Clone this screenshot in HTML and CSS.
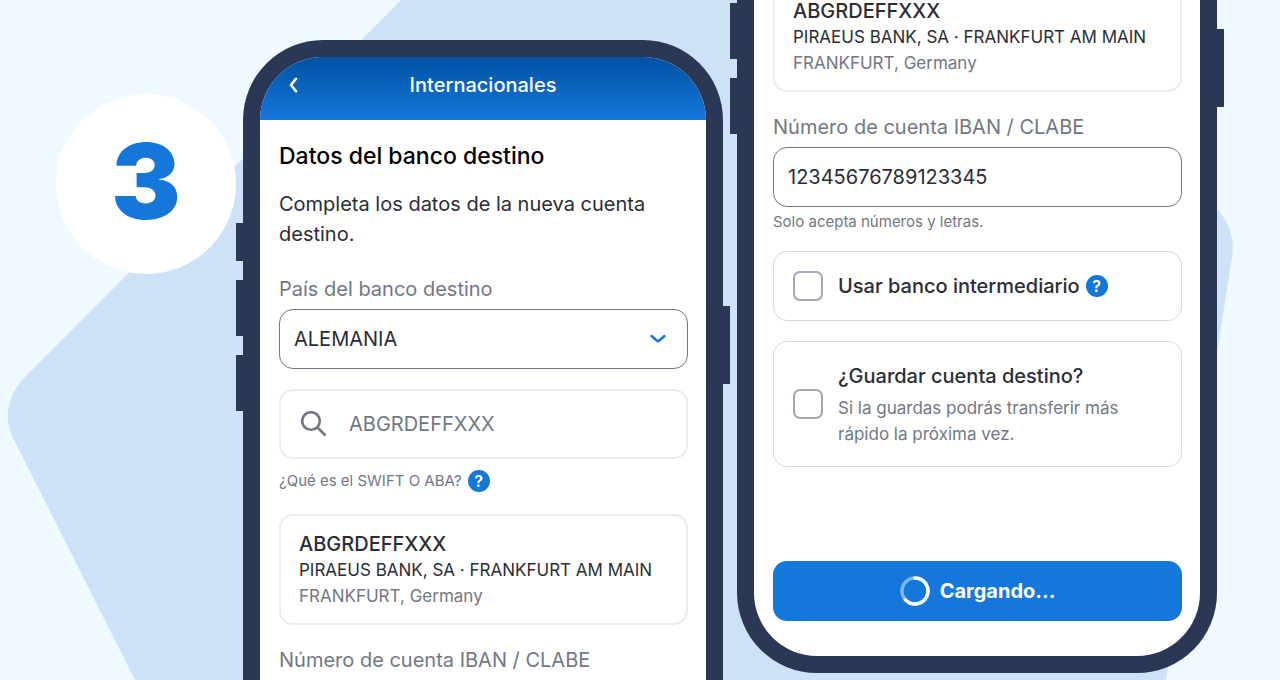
FILE: index.html
```html
<!DOCTYPE html>
<html lang="es">
<head>
    <meta charset="UTF-8">
    <meta name="viewport" content="width=device-width, initial-scale=1.0">
    <title>Internacionales - Datos del banco destino</title>
    <link rel="stylesheet" href="styles.css">
</head>
<body>
    <main class="scene">
        <svg class="scene-shape" viewBox="0 0 1280 680" preserveAspectRatio="xMidYMid slice" aria-hidden="true">
            <path d="M401 0 L25 377 C8 394 3 418 13 438 L135 680 H1166 L1232 257 C1235 238 1229 222 1217 209 L1000 0 Z"/>
        </svg>

        <div class="step">3</div>

        <section class="phone phone-first">
            <span class="key key-mute"></span>
            <span class="key key-up"></span>
            <span class="key key-down"></span>
            <span class="key key-power"></span>
            <div class="screen">
                <header class="topbar">
                    <button class="back" type="button" aria-label="Volver">
                        <svg width="10" height="16" viewBox="0 0 10 16"><path d="M8 1.800 L3 8 L8 14.200"/></svg>
                    </button>
                    <span class="topbar-title">Internacionales</span>
                </header>
                <form class="content">
                    <h1>Datos del banco destino</h1>
                    <p class="intro">Completa los datos de la nueva cuenta destino.</p>

                    <label class="label" for="country">País del banco destino</label>
                    <div class="select-box">
                        <select class="field" id="country">
                            <option>ALEMANIA</option>
                        </select>
                        <svg class="chevron" width="16" height="10" viewBox="0 0 16 10"><path d="M1.600 2 L7 6.800 Q8 7.600 9 6.800 L14.400 2"/></svg>
                    </div>

                    <div class="search">
                        <svg width="26" height="26" viewBox="0 0 26 26"><circle cx="10" cy="10" r="8.800"/><path d="M16.500 16.500 L24.500 24.500"/></svg>
                        <input type="text" aria-label="Código SWIFT o ABA" placeholder="ABGRDEFFXXX">
                    </div>

                    <div class="hint-row">
                        <span>¿Qué es el SWIFT O ABA?</span>
                        <button class="help" type="button" aria-label="Ayuda SWIFT">?</button>
                    </div>

                    <div class="bank">
                        <strong>ABGRDEFFXXX</strong>
                        <span>PIRAEUS BANK, SA · FRANKFURT AM MAIN</span>
                        <span class="muted">FRANKFURT, Germany</span>
                    </div>

                    <span class="label label-account">Número de cuenta IBAN / CLABE</span>
                </form>
            </div>
        </section>

        <section class="phone phone-second">
            <span class="key key-up"></span>
            <span class="key key-down"></span>
            <span class="key key-power"></span>
            <div class="screen">
                <form class="content">
                    <div class="bank">
                        <strong>ABGRDEFFXXX</strong>
                        <span>PIRAEUS BANK, SA · FRANKFURT AM MAIN</span>
                        <span class="muted">FRANKFURT, Germany</span>
                    </div>

                    <label class="label label-account" for="account">Número de cuenta IBAN / CLABE</label>
                    <input class="field" id="account" type="text" value="12345676789123345">
                    <p class="note">Solo acepta números y letras.</p>

                    <div class="option">
                        <input type="checkbox" id="intermediary">
                        <label for="intermediary">Usar banco intermediario</label>
                        <button class="help" type="button" aria-label="Ayuda banco intermediario">?</button>
                    </div>

                    <div class="option option-save">
                        <input type="checkbox" id="save">
                        <label for="save">
                            ¿Guardar cuenta destino?
                            <small>Si la guardas podrás transferir más rápido la próxima vez.</small>
                        </label>
                    </div>

                    <button class="submit" type="button">
                        <svg width="30" height="30" viewBox="0 0 30 30">
                            <circle class="track" cx="15" cy="15" r="13"/>
                            <path d="M15 2 A13 13 0 1 1 5.500 23.900"/>
                        </svg>
                        Cargando...
                    </button>
                </form>
            </div>
        </section>
    </main>
</body>
</html>
```

FILE: styles.css
```css
* {
    box-sizing: border-box;
}
body {
    margin: 0;
    font-family: Inter, "Liberation Sans", sans-serif;
    font-size: 20px;
    line-height: 30px;
    color: #2b2d36;
    background-color: #f0f9ff;
}
h1, p {
    margin: 0;
}
button, input, select {
    font: inherit;
    color: inherit;
}
button {
    border: none;
    padding: 0;
    cursor: pointer;
}
svg {
    display: block;
    fill: none;
}
.scene {
    position: relative;
    display: flex;
    justify-content: center;
    height: 100vh;
    padding: 0 63px 0 56px;
    overflow: hidden;
}
.scene-shape {
    position: absolute;
    inset: 0;
    width: 100%;
    height: 100%;
    fill: #cde2f6;
}
.step {
    position: relative;
    display: flex;
    flex: none;
    align-items: center;
    justify-content: center;
    width: 180px;
    height: 180px;
    margin-top: 94px;
    margin-right: 7px;
    padding-bottom: 6px;
    border-radius: 50%;
    background-color: #fff;
    color: #1677db;
    font-size: 104px;
    font-weight: 900;
}

/* phones */
.phone {
    position: relative;
    flex: 0 1 480px;
    border: 17px solid #2a3755;
    background-color: #fff;
}
.phone-first {
    margin-top: 40px;
    margin-right: 14px;
    border-bottom: none;
    border-radius: 80px 80px 0 0;
}
.phone-second {
    margin-bottom: 7px;
    border-top: none;
    border-radius: 0 0 80px 80px;
}
.screen {
    display: flex;
    flex-direction: column;
    height: 100%;
    overflow: hidden;
}
.phone-first .screen {
    border-radius: 63px 63px 0 0;
}
.phone-second .screen {
    justify-content: flex-end;
}
.content {
    display: flex;
    flex: none;
    flex-direction: column;
    padding: 21px 18px 35px 19px;
}
.key {
    position: absolute;
    left: -24px;
    width: 8px;
    height: 56px;
    background-color: #2a3755;
}
.key-power {
    left: auto;
    right: -24px;
    height: 78px;
}
.phone-first .key-mute {
    top: 166px;
    height: 38px;
}
.phone-first .key-up {
    top: 223px;
}
.phone-first .key-down {
    top: 298px;
}
.phone-first .key-power {
    top: 249px;
}
.phone-second .key-up {
    top: 3px;
}
.phone-second .key-down {
    top: 78px;
}
.phone-second .key-power {
    top: 29px;
}

/* header */
.topbar {
    display: grid;
    grid-template-columns: 10px 1fr 10px;
    flex: none;
    align-items: center;
    padding: 13px 28px 20px;
    background: linear-gradient(#0052a2, #1677db);
    color: #fff;
}
.topbar-title {
    text-align: center;
    font-weight: 500;
}
.back {
    background: none;
}
.back svg {
    stroke: #fff;
    stroke-width: 2.6;
    stroke-linecap: round;
    stroke-linejoin: round;
}

/* form */
h1 {
    color: #000;
    font-size: 23px;
    font-weight: 500;
}
.intro {
    margin-top: 18px;
}
.label {
    margin: 25px 0 5px;
    color: #737785;
}
.label-account {
    margin-top: 20px;
}
.field {
    width: 100%;
    height: 60px;
    padding: 0 14px;
    border: 1px solid #737785;
    border-radius: 14px;
    background-color: #fff;
    appearance: none;
}
.select-box {
    position: relative;
}
.chevron {
    position: absolute;
    top: 25px;
    right: 22px;
    stroke: #1677db;
    stroke-width: 2.5;
    stroke-linecap: round;
    pointer-events: none;
}
.search {
    display: flex;
    align-items: center;
    gap: 22px;
    height: 70px;
    margin-top: 20px;
    padding: 0 20px;
    border: 2px solid #ebecf4;
    border-radius: 14px;
}
.search svg {
    flex: none;
    stroke: #737785;
    stroke-width: 2.6;
}
.search input {
    flex: 1;
    min-width: 0;
    padding: 0;
    border: none;
    background: none;
}
.search input::placeholder {
    color: #737785;
    opacity: 1;
}
.hint-row {
    display: flex;
    align-items: center;
    gap: 6px;
    margin: 11px 0 22px;
    color: #737785;
    font-size: 15px;
    line-height: 22px;
}
.help {
    width: 22px;
    height: 22px;
    border-radius: 50%;
    background-color: #1677db;
    color: #fff;
    font-size: 16px;
    font-weight: 600;
    line-height: 22px;
    text-align: center;
}
.bank {
    display: flex;
    flex-direction: column;
    padding: 15px 18px 14px;
    border: 2px solid #ebecf4;
    border-radius: 14px;
    font-size: 17px;
    line-height: 26px;
}
.bank strong {
    font-size: 20px;
    font-weight: 500;
}
.muted {
    color: #737785;
}
.note {
    margin: 5px 0 19px;
    color: #737785;
    font-size: 15px;
    line-height: 20px;
}
.option {
    display: flex;
    align-items: center;
    min-height: 70px;
    padding: 19px;
    border: 1px solid #d8d9df;
    border-radius: 14px;
    font-weight: 500;
}
.option input {
    flex: none;
    width: 30px;
    height: 30px;
    margin: 0 15px 0 0;
    border: 2px solid #a2a6b6;
    border-radius: 7px;
    background-color: #fff;
    appearance: none;
}
.option input:checked {
    border-color: #1677db;
    background-color: #1677db;
}
.option .help {
    margin-left: 6px;
}
.option-save {
    margin: 20px 0 94px;
}
.option small {
    display: block;
    margin-top: 4px;
    color: #737785;
    font-size: 17px;
    font-weight: 400;
    line-height: 26px;
}
.submit {
    display: flex;
    align-items: center;
    justify-content: center;
    gap: 10px;
    height: 60px;
    border-radius: 14px;
    background-color: #1677db;
    color: #fff;
    font-weight: 700;
}
.submit svg {
    stroke: #fff;
    stroke-width: 3.5;
    stroke-linecap: round;
}
.track {
    opacity: 0.45;
}
```
